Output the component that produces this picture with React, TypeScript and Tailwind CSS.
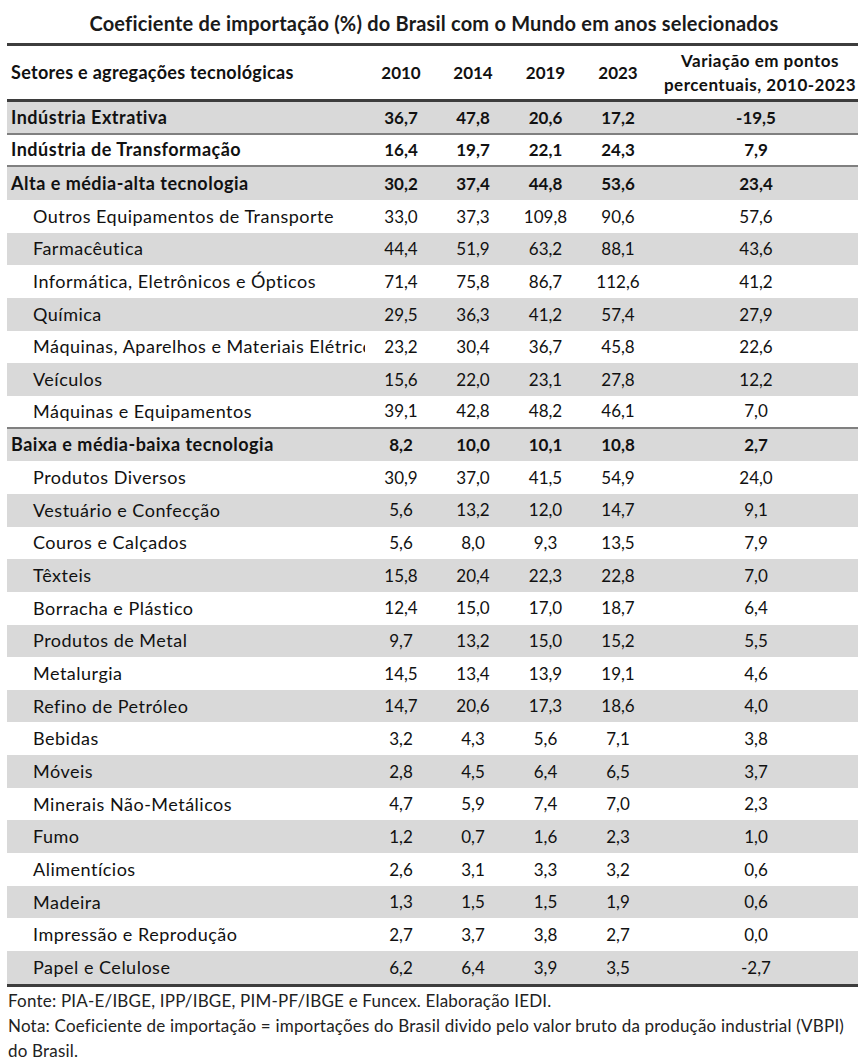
import React from "react";

type Row = { label: string; v: string[]; bold?: boolean; sep?: boolean };

const rows: Row[] = [
  { label: "Indústria Extrativa", v: ["36,7", "47,8", "20,6", "17,2", "-19,5"], bold: true, sep: true },
  { label: "Indústria de Transformação", v: ["16,4", "19,7", "22,1", "24,3", "7,9"], bold: true, sep: true },
  { label: "Alta e média-alta tecnologia", v: ["30,2", "37,4", "44,8", "53,6", "23,4"], bold: true },
  { label: "Outros Equipamentos de Transporte", v: ["33,0", "37,3", "109,8", "90,6", "57,6"] },
  { label: "Farmacêutica", v: ["44,4", "51,9", "63,2", "88,1", "43,6"] },
  { label: "Informática, Eletrônicos e Ópticos", v: ["71,4", "75,8", "86,7", "112,6", "41,2"] },
  { label: "Química", v: ["29,5", "36,3", "41,2", "57,4", "27,9"] },
  { label: "Máquinas, Aparelhos e Materiais Elétricos", v: ["23,2", "30,4", "36,7", "45,8", "22,6"] },
  { label: "Veículos", v: ["15,6", "22,0", "23,1", "27,8", "12,2"] },
  { label: "Máquinas e Equipamentos", v: ["39,1", "42,8", "48,2", "46,1", "7,0"], sep: true },
  { label: "Baixa e média-baixa tecnologia", v: ["8,2", "10,0", "10,1", "10,8", "2,7"], bold: true },
  { label: "Produtos Diversos", v: ["30,9", "37,0", "41,5", "54,9", "24,0"] },
  { label: "Vestuário e Confecção", v: ["5,6", "13,2", "12,0", "14,7", "9,1"] },
  { label: "Couros e Calçados", v: ["5,6", "8,0", "9,3", "13,5", "7,9"] },
  { label: "Têxteis", v: ["15,8", "20,4", "22,3", "22,8", "7,0"] },
  { label: "Borracha e Plástico", v: ["12,4", "15,0", "17,0", "18,7", "6,4"] },
  { label: "Produtos de Metal", v: ["9,7", "13,2", "15,0", "15,2", "5,5"] },
  { label: "Metalurgia", v: ["14,5", "13,4", "13,9", "19,1", "4,6"] },
  { label: "Refino de Petróleo", v: ["14,7", "20,6", "17,3", "18,6", "4,0"] },
  { label: "Bebidas", v: ["3,2", "4,3", "5,6", "7,1", "3,8"] },
  { label: "Móveis", v: ["2,8", "4,5", "6,4", "6,5", "3,7"] },
  { label: "Minerais Não-Metálicos", v: ["4,7", "5,9", "7,4", "7,0", "2,3"] },
  { label: "Fumo", v: ["1,2", "0,7", "1,6", "2,3", "1,0"] },
  { label: "Alimentícios", v: ["2,6", "3,1", "3,3", "3,2", "0,6"] },
  { label: "Madeira", v: ["1,3", "1,5", "1,5", "1,9", "0,6"] },
  { label: "Impressão e Reprodução", v: ["2,7", "3,7", "3,8", "2,7", "0,0"] },
  { label: "Papel e Celulose", v: ["6,2", "6,4", "3,9", "3,5", "-2,7"] },
];

const grid = "grid grid-cols-[358px_72px_72px_73px_72px_204px]";

export default function App() {
  return (
    <div className="w-[867px] h-[1063px] bg-white text-[#111] font-['Lato',sans-serif] overflow-hidden">
      <div className="h-[43px] flex items-center justify-center pt-[2px] pl-[1px] text-[20px] tracking-[0.2px] font-bold text-[#1a1a1a]">
        Coeficiente de importação (%) do Brasil com o Mundo em anos selecionados
      </div>
      <div className="ml-[7px] w-[851px]">
        <div className={`${grid} h-[59px] border-t-[3px] border-b-[3px] border-[#3d3d3d] items-center text-[17px] font-bold`}>
          <div className="pl-[4px] text-[18px] tracking-[0.3px]">Setores e agregações tecnológicas</div>
          <div className="text-center">2010</div>
          <div className="text-center">2014</div>
          <div className="text-center">2019</div>
          <div className="text-center">2023</div>
          <div className="text-center leading-[24px] pl-[8px] tracking-[0.5px]">
            Variação em pontos
            <br />
            percentuais, 2010-2023
          </div>
        </div>
        {rows.map((r, i) => (
          <div
            key={i}
            className={`${grid} h-[32.67px] items-center text-[17px] ${i % 2 === 0 ? "bg-[#d9d9d9]" : "bg-white"} ${
              r.bold ? "font-bold" : ""
            } ${r.sep ? "border-b-[2px] border-[#808080]" : ""}`}
          >
            <div
              className={`${r.bold ? "pl-[4px]" : "pl-[26px]"} text-[18px] tracking-[0.5px] whitespace-nowrap overflow-hidden`}
            >
              {r.label}
            </div>
            {r.v.map((x, j) => (
              <div key={j} className="text-center">
                {x}
              </div>
            ))}
          </div>
        ))}
        <div className="border-t-[3px] border-[#3d3d3d]" />
      </div>
      <div className="pl-[8px] pr-[4px] pt-[1px] text-[17px] tracking-[0.2px] leading-[25px] text-[#222]">
        <div>Fonte: PIA-E/IBGE, IPP/IBGE, PIM-PF/IBGE e Funcex. Elaboração IEDI.</div>
        <div>
          Nota: Coeficiente de importação = importações do Brasil divido pelo valor bruto da produção industrial (VBPI) do Brasil.
        </div>
      </div>
    </div>
  );
}
